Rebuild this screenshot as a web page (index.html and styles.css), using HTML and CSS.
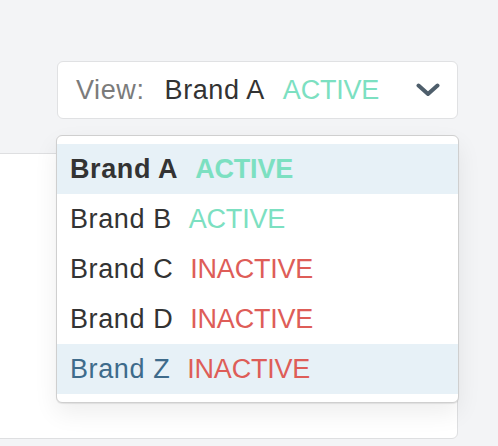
FILE: index.html
```html
<!DOCTYPE html>
<html>
<head>
<meta charset="utf-8">
<link rel="stylesheet" href="styles.css">
</head>
<body>
<div class="page">
  <div class="select">
    <span class="label">View:</span>
    <span class="value">Brand A</span>
    <span class="status active">ACTIVE</span>
    <svg class="chevron" width="24" height="14" viewBox="0 0 24 14"><path d="M2.5 2.5 L12 11 L21.5 2.5" fill="none" stroke="#4e5e6b" stroke-width="4" stroke-linecap="round" stroke-linejoin="round"/></svg>
  </div>
  <div class="card"></div>
  <ul class="menu">
    <li class="item selected"><span class="name">Brand A</span><span class="status active">ACTIVE</span></li>
    <li class="item"><span class="name">Brand B</span><span class="status active">ACTIVE</span></li>
    <li class="item"><span class="name">Brand C</span><span class="status inactive">INACTIVE</span></li>
    <li class="item"><span class="name">Brand D</span><span class="status inactive">INACTIVE</span></li>
    <li class="item hover"><span class="name">Brand Z</span><span class="status inactive">INACTIVE</span></li>
  </ul>
</div>
</body>
</html>
```
FILE: styles.css
```css
html, body {
  margin: 0;
  padding: 0;
  background: #f3f4f6;
  height: 446px;
  overflow: hidden;
  font-family: "Liberation Sans", Arial, sans-serif;
  font-size: 27px;
  color: #333;
}
.page {
  position: relative;
  padding: 61px 0 0 57px;
  width: 401px;
}
.select {
  box-sizing: border-box;
  height: 58px;
  background: #fff;
  border: 1px solid #e0e1e3;
  border-radius: 6px;
  display: flex;
  align-items: center;
  padding: 0 17px 0 18px;
  gap: 18px;
}
.label {
  color: #7b7b7b;
  letter-spacing: 0.6px;
  margin-right: 2px;
}
.value, .name {
  letter-spacing: 0.6px;
}
.value {
  color: #333;
}
.status {
  letter-spacing: -0.2px;
}
.chevron {
  margin-left: auto;
}
.status.active {
  color: #7ce0c1;
}
.status.inactive {
  color: #de5d58;
}
.card {
  box-sizing: border-box;
  margin-top: 34px;
  margin-left: -80px;
  width: 481px;
  height: 286px;
  background: #fff;
  border: 1px solid #dedfe1;
  border-radius: 6px;
}
.menu {
  position: absolute;
  top: 135px;
  left: 56px;
  width: 403px;
  box-sizing: border-box;
  margin: 0;
  padding: 8px 0;
  list-style: none;
  background: #fff;
  border: 1px solid #cfcfcf;
  border-radius: 6px;
  box-shadow: 0 1px 1px rgba(0,0,0,0.08), 0 10px 24px rgba(0,0,0,0.07);
}
.item {
  height: 50px;
  display: flex;
  align-items: center;
  padding-left: 13px;
  gap: 17px;
}
.item.selected {
  background: #e7f1f7;
  font-weight: bold;
}
.item.hover {
  background: #e7f1f7;
}
.item.hover .name {
  color: #3e6b8b;
}
```
